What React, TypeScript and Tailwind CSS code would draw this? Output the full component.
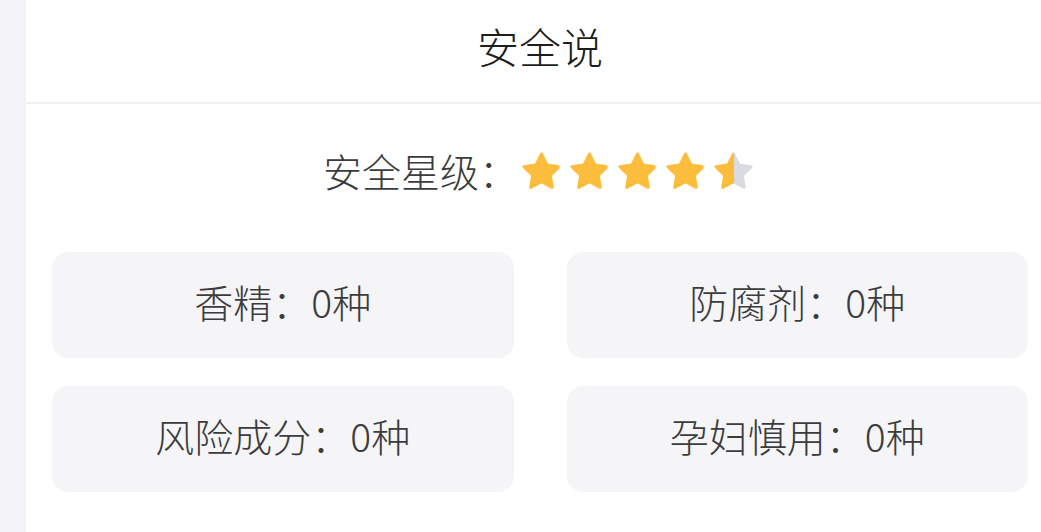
const stats = [
  { label: "香精", count: 0 },
  { label: "防腐剂", count: 0 },
  { label: "风险成分", count: 0 },
  { label: "孕妇慎用", count: 0 },
];

const STAR_PATH =
  "M12 2.6l2.75 5.6 6.15.9-4.45 4.33 1.05 6.12L12 16.67l-5.5 2.88 1.05-6.12L3.1 9.1l6.15-.9z";

const Star = ({ fill }: { fill: number }) => {
  const id = `half-${Math.round(fill * 100)}`;
  return (
    <svg viewBox="0 0 24 24" className="w-[47px] h-[47px]">
      <defs>
        <linearGradient id={id} x1="0" x2="1" y1="0" y2="0">
          <stop offset={fill} stopColor="#fbbd3b" />
          <stop offset={fill} stopColor="#d9dbe1" />
        </linearGradient>
      </defs>
      <path
        d={STAR_PATH}
        fill={`url(#${id})`}
        stroke={`url(#${id})`}
        strokeWidth="1.6"
        strokeLinejoin="round"
      />
    </svg>
  );
};

const App = () => {
  const rating = 4.5;

  return (
    <div
      className="flex h-[532px] w-[1041px] overflow-hidden bg-[#f3f3f9]"
      style={{ fontFamily: '"Noto Sans CJK SC", "Noto Sans", sans-serif' }}
    >
      <aside className="w-[26px] shrink-0" />

      <main className="w-[1028px] shrink-0 bg-white">
        <header className="flex h-[104px] items-center justify-center border-b-2 border-[#f0f0f3] pb-[12px]">
          <h1 className="text-[42px] font-light text-[#1e1e1e]">安全说</h1>
        </header>

        <section className="flex h-[148px] items-center justify-center pb-[12px]">
          <span className="text-[39px] font-light text-[#3c3c3c] pb-[3px]">安全星级：</span>
          <div className="flex gap-[1px]">
            {[0, 1, 2, 3, 4].map((i) => (
              <Star key={i} fill={Math.max(0, Math.min(1, rating - i))} />
            ))}
          </div>
        </section>

        <section className="grid grid-cols-2 gap-x-[53px] gap-y-[28px] px-[26px]">
          {stats.map((s) => (
            <div
              key={s.label}
              className="flex h-[106px] items-center justify-center rounded-[16px] bg-[#f5f5f8] pb-[8px] text-[39px] font-light text-[#3c3c3c]"
            >
              {s.label}：{s.count}种
            </div>
          ))}
        </section>
      </main>
    </div>
  );
};

export default App;
